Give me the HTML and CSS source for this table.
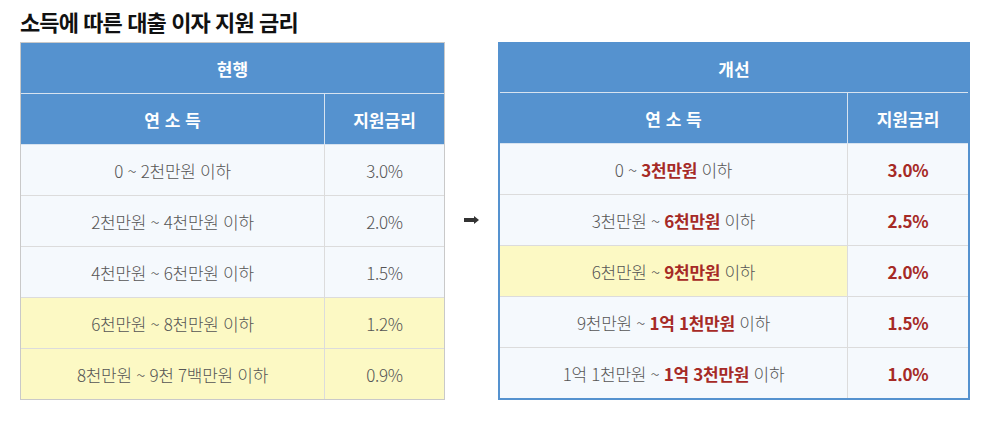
FILE: index.html
```html
<!DOCTYPE html>
<html lang="ko">
<head>
<meta charset="utf-8">
<link rel="stylesheet" href="styles.css">
</head>
<body>
<div class="page">
  <h1 class="title">소득에 따른 대출 이자 지원 금리</h1>
  <div class="compare">
    <table class="rate rate-current">
      <colgroup><col class="col1"><col class="col2"></colgroup>
      <tr><th colspan="2" class="h-top">현행</th></tr>
      <tr><th class="c1 h-sub">연 소 득</th><th class="c2 h-sub">지원금리</th></tr>
      <tr><td class="c1">0 ~ 2천만원 이하</td><td class="c2">3.0%</td></tr>
      <tr><td class="c1">2천만원 ~ 4천만원 이하</td><td class="c2">2.0%</td></tr>
      <tr><td class="c1">4천만원 ~ 6천만원 이하</td><td class="c2">1.5%</td></tr>
      <tr class="hl"><td class="c1">6천만원 ~ 8천만원 이하</td><td class="c2">1.2%</td></tr>
      <tr class="hl last"><td class="c1">8천만원 ~ 9천 7백만원 이하</td><td class="c2">0.9%</td></tr>
    </table>
    <div class="arrow">
      <svg width="16" height="8" viewBox="0 0 16 8"><rect x="0" y="2" width="11" height="4" fill="#333"/><path d="M10 0 L15 4 L10 8 Z" fill="#333"/></svg>
    </div>
    <table class="rate rate-new">
      <colgroup><col class="col1"><col class="col2"></colgroup>
      <tr><th colspan="2" class="h-top">개선</th></tr>
      <tr><th class="c1 h-sub">연 소 득</th><th class="c2 h-sub">지원금리</th></tr>
      <tr><td class="c1">0 ~ <b>3천만원</b> 이하</td><td class="c2"><b>3.0%</b></td></tr>
      <tr><td class="c1">3천만원 ~ <b>6천만원</b> 이하</td><td class="c2"><b>2.5%</b></td></tr>
      <tr><td class="c1 hlc">6천만원 ~ <b>9천만원</b> 이하</td><td class="c2"><b>2.0%</b></td></tr>
      <tr><td class="c1">9천만원 ~ <b>1억 1천만원</b> 이하</td><td class="c2"><b>1.5%</b></td></tr>
      <tr class="last"><td class="c1">1억 1천만원 ~ <b>1억 3천만원</b> 이하</td><td class="c2"><b>1.0%</b></td></tr>
    </table>
  </div>
</div>
</body>
</html>
```

FILE: styles.css
```css
* { box-sizing: border-box; }
html, body { margin: 0; padding: 0; background: #fff; }
body {
  font-family: "Noto Sans CJK KR", "Noto Sans", sans-serif;
  color: #555;
}
.page { padding: 0 0 0 20px; }
.title {
  margin: 0;
  height: 42px;
  padding-top: 6px;
  font-size: 22px;
  line-height: 30px;
  font-weight: 700;
  color: #111;
  letter-spacing: -0.9px;
}
.compare { display: flex; align-items: flex-start; }
.rate {
  border-collapse: separate;
  border-spacing: 0;
  table-layout: fixed;
}
.rate-current { width: 425px; border: 1px solid #c9c9c9; }
.rate-new { width: 472px; border: 2px solid #5592cf; }
.rate-current .col1 { width: 304px; }
.rate-current .col2 { width: 119px; }
.rate-new .col1 { width: 348px; }
.rate-new .col2 { width: 120px; }
.rate th, .rate td {
  padding: 0;
  text-align: center;
  vertical-align: middle;
  height: 51px;
  border-bottom: 1px solid #dcdcdc;
}
.rate .c1 { border-right: 1px solid #dcdcdc; }
.rate th {
  background: #5592cf;
  color: #fff;
  font-size: 17px;
  font-weight: 700;
  border-color: #d7e3f0;
}
.rate-new .h-top { height: 49px; }
.rate th.c1 { border-right-color: #d7e3f0; }
.rate td {
  background: #f5f9fd;
  font-size: 17px;
  font-weight: 300;
  color: #555;
  letter-spacing: -0.3px;
}
.rate tr.last td { border-bottom: 0; height: 50px; }
.rate tr.hl td, .rate td.hlc { background: #fcf9c4; }
.rate td b { color: #a62a26; font-weight: 700; }
.arrow {
  width: 53px;
  height: 358px;
  display: flex;
  align-items: center;
  justify-content: center;
}
.arrow svg { display: block; margin-top: -2px; }
```
